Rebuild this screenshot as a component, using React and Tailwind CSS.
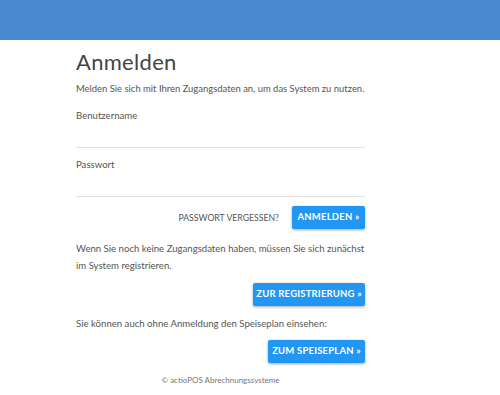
import React from 'react';

const font = { fontFamily: 'Lato, "Open Sans", sans-serif' };

const ActionButton = ({ children, className = '' }) => (
  <button
    type="button"
    className={`h-[23px] rounded-[2px] bg-[#2196f3] text-white text-[9.5px] font-bold uppercase tracking-[0.2px] shadow-[0_1px_3px_rgba(0,0,0,0.35)] ${className}`}
  >
    {children}
  </button>
);

const App = () => {
  return (
    <div className="w-[500px] h-[395px] bg-white text-[#555]" style={font}>
      <header className="h-10 bg-[#4a89d0]" />

      <main className="ml-[76px] w-[289px]">
        <h1 className="mt-[9px] h-[26px] text-[22px] leading-[26px] text-[#444] tracking-[0.3px]">Anmelden</h1>
        <p className="mt-[8px] whitespace-nowrap text-[9.45px] leading-[12px]">
          Melden Sie sich mit Ihren Zugangsdaten an, um das System zu nutzen.
        </p>

        <form className="mt-[15px]">
          <label className="block text-[9.6px] leading-[12px]">Benutzername</label>
          <input type="text" className="block w-full h-[26px] border-b border-[#e0e0e0] outline-none" />

          <label className="block mt-[11px] text-[9.6px] leading-[12px]">Passwort</label>
          <input type="password" className="block w-full h-[26px] border-b border-[#e0e0e0] outline-none" />

          <div className="mt-[9px] flex items-center justify-end gap-[13px]">
            <span className="text-[8.7px] uppercase text-[#555]">Passwort vergessen?</span>
            <ActionButton className="w-[73px]">Anmelden »</ActionButton>
          </div>
        </form>

        <p className="mt-[11px] text-[9.6px] leading-[17px]">
          Wenn Sie noch keine Zugangsdaten haben, müssen Sie sich zunächst im System registrieren.
        </p>
        <div className="mt-[9px] flex justify-end">
          <ActionButton className="w-[112px]">Zur Registrierung »</ActionButton>
        </div>

        <p className="mt-[12px] text-[9.6px] leading-[12px]">
          Sie können auch ohne Anmeldung den Speiseplan einsehen:
        </p>
        <div className="mt-[10px] flex justify-end">
          <ActionButton className="w-[97px]">Zum Speiseplan »</ActionButton>
        </div>

        <footer className="mt-[11px] text-center text-[8px] leading-[12px] text-[#777]">
          © actioPOS Abrechnungssysteme
        </footer>
      </main>
    </div>
  );
};

export default App;
